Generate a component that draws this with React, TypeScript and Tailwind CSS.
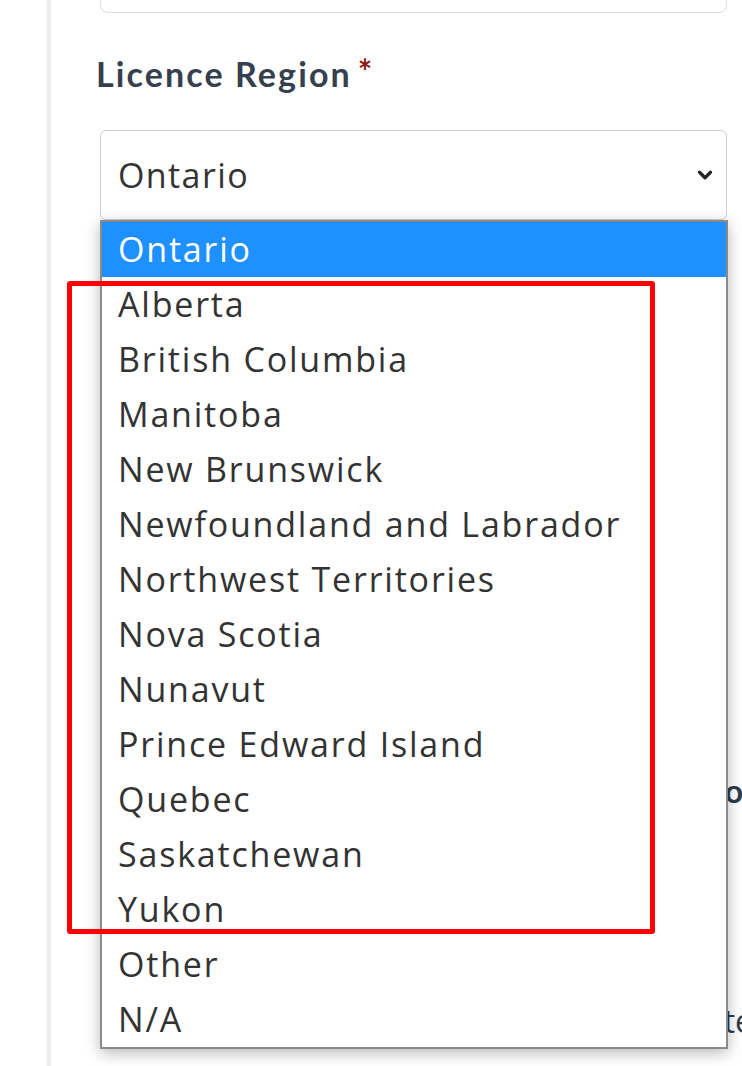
import { ChevronDown } from "lucide-react";

const regions = [
  "Ontario",
  "Alberta",
  "British Columbia",
  "Manitoba",
  "New Brunswick",
  "Newfoundland and Labrador",
  "Northwest Territories",
  "Nova Scotia",
  "Nunavut",
  "Prince Edward Island",
  "Quebec",
  "Saskatchewan",
  "Yukon",
  "Other",
  "N/A",
];

export default function App() {
  return (
    <div
      className="relative w-[742px] h-[1066px] overflow-hidden bg-white"
      style={{ fontFamily: '"Open Sans", "Noto Sans", sans-serif' }}
    >
      <div className="flex h-full">
        {/* left rule of the card */}
        <div className="w-[47px] shrink-0" />
        <div className="w-[4px] shrink-0 bg-[#ececec]" />

        <div className="flex-1 pl-[49px] pr-[15px]">
          {/* field above, cut off at top */}
          <div className="h-[11px] -mt-[40px] pt-[40px] box-content border border-[#dcdcdc] rounded-lg" />

          <label
            className="flex items-start mt-[41px] text-[34px] font-bold leading-[40px] text-[#353f4e] tracking-[2.1px] -ml-[4px]"
            style={{ fontFamily: "Lato, sans-serif" }}
          >
            Licence Region
            <span className="ml-[6px] text-[#8b1a1a] text-[34px] leading-[34px]">*</span>
          </label>

          <div className="mt-[36px] h-[90px] flex items-center justify-between border border-[#cfcfcf] rounded-[6px] pl-[17px] pr-[10px] bg-white">
            <span className="text-[34px] tracking-[1.4px] text-[#333]">Ontario</span>
            <ChevronDown size={22} strokeWidth={3.5} className="text-[#222]" />
          </div>

          {/* content beneath the open list */}
          <div className="mt-[547px] flex justify-end -mr-[28px]">
            <span className="text-[32px] font-bold text-[#2d3a4a]" style={{ fontFamily: "Lato, sans-serif" }}>or</span>
          </div>
          <div className="mt-[182px] flex justify-end -mr-[26px]">
            <span className="text-[32px] text-[#2d3a4a]">te</span>
          </div>
        </div>
      </div>

      {/* open native list */}
      <ul className="absolute left-[100px] top-[220px] w-[628px] border-2 border-[#8a8a8a] bg-white shadow-[0_4px_14px_rgba(0,0,0,0.28)]">
        {regions.map((r, i) => (
          <li
            key={r}
            className={
              i === 0
                ? "h-[55px] flex items-center pl-[16px] text-[34px] tracking-[1.8px] bg-[#1e90ff] text-white"
                : "h-[55px] flex items-center pl-[16px] text-[34px] tracking-[1.8px] text-[#333]"
            }
          >
            {r}
          </li>
        ))}
      </ul>

      {/* red annotation box */}
      <div className="absolute left-[67px] top-[281px] w-[588px] h-[653px] border-[5px] border-[#ff0000] rounded-[3px]" />
    </div>
  );
}
